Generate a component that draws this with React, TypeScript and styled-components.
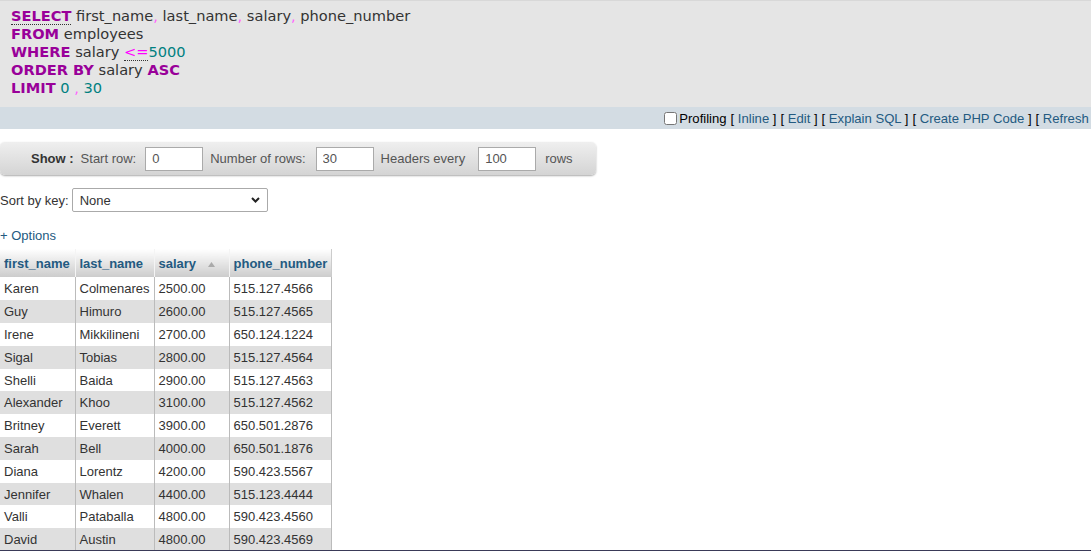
import React from "react";
import styled, { createGlobalStyle } from "styled-components";

const Global = createGlobalStyle`
  html, body { margin: 0; padding: 0; background: #fff; overflow: hidden; }
  body { font-family: "Liberation Sans", Arial, sans-serif; font-size: 13px; color: #333; }
`;

const Page = styled.div`
  display: flex;
  flex-direction: column;
  width: 1091px;
  height: 551px;
  overflow: hidden;
`;

const SqlBox = styled.div`
  background: #e5e5e5;
  border-top: 1px solid #d8d8d8;
  padding: 6px 11px 10px;
  font-family: "DejaVu Sans", Verdana, sans-serif;
  font-size: 14.6px;
  line-height: 18px;
  color: #333;
`;

const SqlLine = styled.div`
  white-space: pre;
`;

const Kw = styled.span<{ $doc?: boolean }>`
  color: #990099;
  font-weight: bold;
  ${(p) => (p.$doc ? "border-bottom: 1px dotted #333;" : "")}
`;

const Punct = styled.span`
  color: #ff66ff;
`;

const Op = styled.span`
  color: #ff00ff;
  border-bottom: 1px dotted #333;
`;

const Num = styled.span`
  color: #008080;
`;

const ActionBar = styled.div`
  background: #d3dce3;
  height: 23px;
  padding-top: 2px;
  box-sizing: border-box;
  display: flex;
  align-items: center;
  justify-content: flex-end;
  margin-right: -5px;
  white-space: nowrap;
  color: #000;
  font-size: 13.1px;
`;

const Check = styled.input`
  width: 13px;
  height: 13px;
  margin: 0 2px 0 0;
`;

const Link = styled.a`
  color: #235a81;
  text-decoration: none;
`;

const Bracket = styled.span`
  margin-left: 4px;
`;

const ShowBar = styled.div`
  margin-top: 13px;
  width: 596px;
  height: 36px;
  box-sizing: border-box;
  border-radius: 5px;
  background: linear-gradient(#efefef, #d4d4d4);
  box-shadow: 0 1px 2px #aaa;
  display: flex;
  align-items: center;
  padding-left: 31px;
  gap: 7px;
  color: #555;
`;

const ShowLabel = styled.span`
  font-weight: bold;
  color: #333;
`;

const Field = styled.input<{ $ml?: number }>`
  width: 58px;
  height: 24px;
  box-sizing: border-box;
  border: 1px solid #aaa;
  background: #fff;
  padding: 0 6px;
  font-family: "Liberation Sans", Arial, sans-serif;
  font-size: 13px;
  color: #555;
  margin: 0 0 0 ${(p) => p.$ml || 0}px;
`;

const Trail = styled.span<{ $ml?: number }>`
  margin-left: ${(p) => p.$ml || 0}px;
`;

const SortRow = styled.div`
  margin-top: 13px;
  display: flex;
  align-items: center;
  gap: 3px;
  color: #333;
`;

const SelectWrap = styled.div`
  position: relative;
  width: 196px;
  height: 24px;
`;

const Select = styled.select`
  appearance: none;
  width: 100%;
  height: 100%;
  box-sizing: border-box;
  border: 1px solid #aaa;
  border-radius: 2px;
  background: #fff;
  padding: 0 0 0 7px;
  font-family: "Liberation Sans", Arial, sans-serif;
  font-size: 13px;
  color: #333;
`;

const Chevron = styled.svg`
  position: absolute;
  right: 8px;
  top: 9px;
  pointer-events: none;
`;

const Options = styled.div`
  margin-top: 16px;
  line-height: 16px;
`;

const Table = styled.table`
  margin-top: 5px;
  border-collapse: collapse;
  table-layout: fixed;
  width: 331px;
`;

const Th = styled.th`
  height: 28px;
  padding: 0 4px;
  text-align: left;
  font-weight: bold;
  color: #235a81;
  background: linear-gradient(#ffffff, #cccccc);
  border-right: 1px solid #f4f4f4;
  white-space: nowrap;
  &:last-child { border-right: 1px solid #ccc; }
`;

const SortArrow = styled.svg`
  margin-left: 12px;
  vertical-align: 1px;
`;

const Tr = styled.tr<{ $alt: boolean }>`
  background: ${(p) => (p.$alt ? "#dfdfdf" : "#ffffff")};
`;

const Td = styled.td<{ $mark?: boolean }>`
  height: 22.8px;
  padding: 0 4px;
  white-space: nowrap;
  color: #333;
  border-right: 1px solid #bbb;
  ${(p) => (p.$mark ? "border-left: 1px solid #f5c9a0;" : "")}
`;

const BottomEdge = styled.div`
  position: fixed;
  left: 0;
  right: 0;
  bottom: 0;
  height: 1px;
  background: #3a3a58;
`;

const rows: [string, string, string, string][] = [
  ["Karen", "Colmenares", "2500.00", "515.127.4566"],
  ["Guy", "Himuro", "2600.00", "515.127.4565"],
  ["Irene", "Mikkilineni", "2700.00", "650.124.1224"],
  ["Sigal", "Tobias", "2800.00", "515.127.4564"],
  ["Shelli", "Baida", "2900.00", "515.127.4563"],
  ["Alexander", "Khoo", "3100.00", "515.127.4562"],
  ["Britney", "Everett", "3900.00", "650.501.2876"],
  ["Sarah", "Bell", "4000.00", "650.501.1876"],
  ["Diana", "Lorentz", "4200.00", "590.423.5567"],
  ["Jennifer", "Whalen", "4400.00", "515.123.4444"],
  ["Valli", "Pataballa", "4800.00", "590.423.4560"],
  ["David", "Austin", "4800.00", "590.423.4569"],
];

export default function App() {
  return (
    <Page>
      <Global />
      <SqlBox>
        <SqlLine>
          <Kw $doc>SELECT</Kw> first_name<Punct>,</Punct> last_name<Punct>,</Punct> salary<Punct>,</Punct> phone_number
        </SqlLine>
        <SqlLine>
          <Kw>FROM</Kw> employees
        </SqlLine>
        <SqlLine>
          <Kw>WHERE</Kw> salary <Op>&lt;=</Op><Num>5000</Num>
        </SqlLine>
        <SqlLine>
          <Kw>ORDER BY</Kw> salary <Kw>ASC</Kw>
        </SqlLine>
        <SqlLine>
          <Kw>LIMIT</Kw> <Num>0</Num> <Punct>,</Punct> <Num>30</Num>
        </SqlLine>
      </SqlBox>
      <ActionBar>
        <Check type="checkbox" />
        <span>Profiling</span>
        <Bracket>[ <Link href="#">Inline</Link> ]</Bracket>
        <Bracket>[ <Link href="#">Edit</Link> ]</Bracket>
        <Bracket>[ <Link href="#">Explain SQL</Link> ]</Bracket>
        <Bracket>[ <Link href="#">Create PHP Code</Link> ]</Bracket>
        <Bracket>[ <Link href="#">Refresh</Link> ]</Bracket>
      </ActionBar>
      <ShowBar>
        <ShowLabel>Show :</ShowLabel>
        <span>Start row:</span>
        <Field defaultValue="0" $ml={2} />
        <span>Number of rows:</span>
        <Field defaultValue="30" $ml={3} />
        <span>Headers every</span>
        <Field defaultValue="100" $ml={6} />
        <Trail $ml={2}>rows</Trail>
      </ShowBar>
      <SortRow>
        <span>Sort by key:</span>
        <SelectWrap>
          <Select defaultValue="None">
            <option>None</option>
          </Select>
          <Chevron width="9" height="6" viewBox="0 0 9 6">
            <path d="M1 1 L4.5 4.5 L8 1" fill="none" stroke="#222" strokeWidth="2" />
          </Chevron>
        </SelectWrap>
      </SortRow>
      <Options>
        <Link href="#">+ Options</Link>
      </Options>
      <Table>
        <colgroup>
          <col style={{ width: 75 }} />
          <col style={{ width: 79 }} />
          <col style={{ width: 75 }} />
          <col style={{ width: 102 }} />
        </colgroup>
        <thead>
          <tr>
            <Th>first_name</Th>
            <Th>last_name</Th>
            <Th>
              salary
              <SortArrow width="7" height="5" viewBox="0 0 7 5">
                <path d="M0 5 L3.5 0 L7 5 Z" fill="#aaa" />
              </SortArrow>
            </Th>
            <Th>phone_number</Th>
          </tr>
        </thead>
        <tbody>
          {rows.map((r, i) => (
            <Tr key={i} $alt={i % 2 === 1}>
              <Td>{r[0]}</Td>
              <Td>{r[1]}</Td>
              <Td>{r[2]}</Td>
              <Td $mark>{r[3]}</Td>
            </Tr>
          ))}
        </tbody>
      </Table>
      <BottomEdge />
    </Page>
  );
}
